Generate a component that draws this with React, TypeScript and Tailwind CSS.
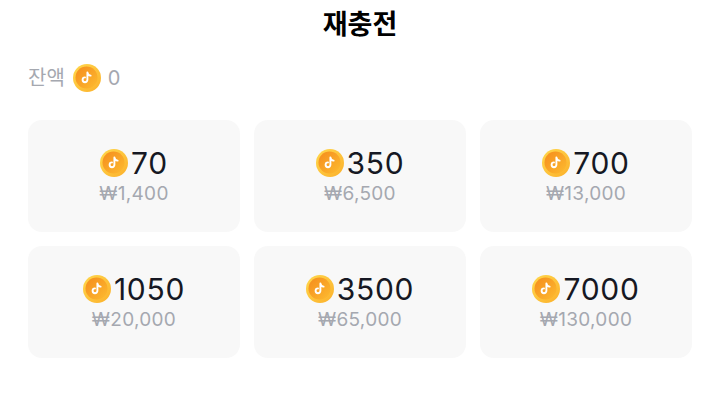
const packs = [
  { coins: '70', price: '₩1,400' },
  { coins: '350', price: '₩6,500' },
  { coins: '700', price: '₩13,000' },
  { coins: '1050', price: '₩20,000' },
  { coins: '3500', price: '₩65,000' },
  { coins: '7000', price: '₩130,000' },
]

function Coin() {
  return (
    <svg width={28} height={28} viewBox="0 0 28 28" className="shrink-0">
      <defs>
        <linearGradient id="coinRim" x1="0" y1="0" x2="1" y2="1">
          <stop offset="0%" stopColor="#ffd84c" />
          <stop offset="100%" stopColor="#fcb02b" />
        </linearGradient>
        <linearGradient id="coinFace" x1="0" y1="0" x2="1" y2="1">
          <stop offset="0%" stopColor="#f58c1d" />
          <stop offset="100%" stopColor="#fdbb30" />
        </linearGradient>
      </defs>
      <circle cx="14" cy="14" r="14" fill="url(#coinRim)" />
      <circle cx="13.5" cy="13.5" r="11" fill="url(#coinFace)" />
      <path
        d="M14.4 8.4v7.4a2.4 2.4 0 1 1-2.4-2.4M14.4 8.4c.2 1.8 1.5 3 3.2 3.2"
        fill="none"
        stroke="#fff"
        strokeWidth="1.9"
        strokeLinecap="round"
      />
    </svg>
  )
}

export default function App() {
  return (
    <div className="h-[407px] w-[720px] bg-white font-['Inter','Noto_Sans_CJK_KR',sans-serif]">
      <h1 className="pt-[7px] text-center text-[27px] leading-[36px] font-bold text-black">재충전</h1>

      {/* Balance */}
      <div className="mt-[21px] flex h-[28px] items-center px-[28px] text-[20px] text-[#a5a8b0]">
        <span>잔액</span>
        <span className="ml-[8px] mr-[7px]"><Coin /></span>
        <span>0</span>
      </div>

      {/* Packs */}
      <div className="mt-[28px] grid grid-cols-3 gap-[14px] px-[28px]">
        {packs.map((p) => (
          <div key={p.coins} className="flex h-[112px] flex-col items-center justify-center rounded-[14px] bg-[#f8f8f8]">
            <div className="flex items-center">
              <Coin />
              <span className="ml-[3px] text-[30px] leading-[32px] tracking-[0.7px] text-[#161823]">{p.coins}</span>
            </div>
            <div className="mt-[3px] text-[19px] leading-[24px] tracking-[0.3px] text-[#a5a8b0]">{p.price}</div>
          </div>
        ))}
      </div>
    </div>
  )
}
